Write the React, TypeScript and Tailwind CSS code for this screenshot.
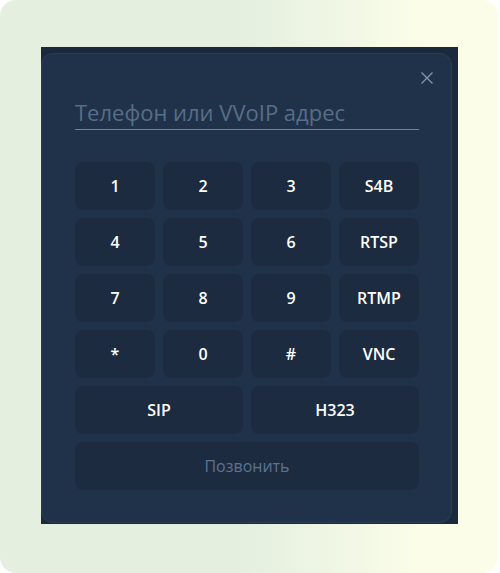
const keys = ["1", "2", "3", "S4B", "4", "5", "6", "RTSP", "7", "8", "9", "RTMP", "*", "0", "#", "VNC"];

const Key = ({ label, wide }: { label: string; wide?: boolean }) => (
	<button
		className={
			wide
				? "col-span-2 h-12 rounded-lg bg-[#1c2b40] text-base font-semibold text-white"
				: "h-12 rounded-lg bg-[#1c2b40] text-base font-semibold text-white"
		}
	>
		{label}
	</button>
);

export default function App() {
	return (
		<div className="min-h-[573px] w-[500px] bg-white font-['Open_Sans',sans-serif]">
			<div className="h-[573px] w-[498px] rounded-2xl bg-[linear-gradient(to_right,#e4efe0_48%,#fbfde8_85%)] pl-[41px] pt-[47px]">
				<div className="w-[417px] bg-[#1a293b] pb-[1px] pr-[6px] pt-[6px]">
					<div className="relative h-[470px] rounded-xl border border-[#2a3d55] bg-[#203249] pb-8 pl-[33px] pr-8 pt-9">
						<button className="absolute right-4 top-4 text-[#8597ad]">
							<svg width="16" height="16" viewBox="0 0 16 16" fill="none" stroke="currentColor" strokeWidth="1.3">
								<path d="M2.5 2.5l11 11M13.5 2.5l-11 11" />
							</svg>
						</button>

						<input
							className="h-10 w-[344px] border-b border-[#71839c] bg-transparent pt-[5px] text-[22px] text-white outline-none placeholder:text-[#566e88]"
							placeholder="Телефон или VVoIP адрес"
						/>

						<div className="mt-8 grid w-[344px] grid-cols-4 gap-2">
							{keys.map((k) => (
								<Key key={k} label={k} />
							))}
							<Key label="SIP" wide />
							<Key label="H323" wide />
							<button className="col-span-4 h-12 rounded-lg bg-[#1c2b40] text-base text-[#5c7490]">
								Позвонить
							</button>
						</div>
					</div>
				</div>
			</div>
		</div>
	);
}
